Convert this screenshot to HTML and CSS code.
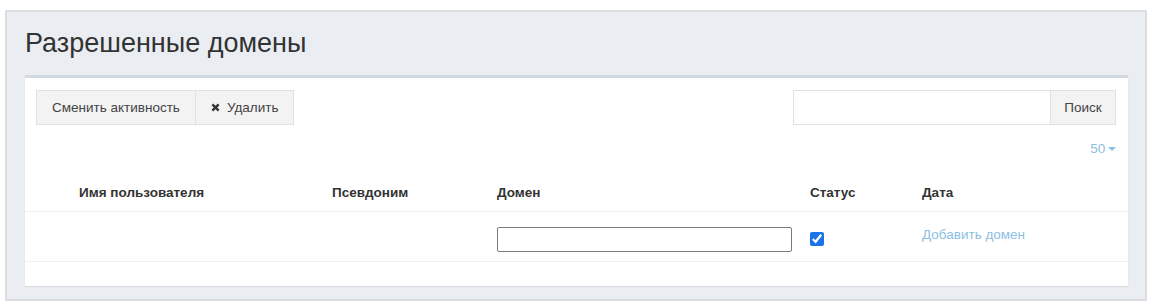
FILE: index.html
```html
<!DOCTYPE html>
<html lang="ru">
<head>
    <meta charset="UTF-8">
    <meta name="viewport" content="width=device-width, initial-scale=1.0">
    <title>Разрешенные домены</title>
    <link rel="stylesheet" href="styles.css">
</head>
<body>
    <div class="panel">
        <h1 class="titulo">Разрешенные домены</h1>

        <div class="box">
            <div class="box-tools">
                <div class="btn-group">
                    <button class="btn">Сменить активность</button>
                    <button class="btn">
                        <svg class="icon-x" width="9" height="9" viewBox="0 0 10 10">
                            <path d="M1.5 1.5 L8.5 8.5 M8.5 1.5 L1.5 8.5" stroke="#333" stroke-width="2.6" stroke-linecap="butt"/>
                        </svg>
                        Удалить
                    </button>
                </div>

                <div class="search-group">
                    <input type="text" class="search-input">
                    <button class="btn btn-search">Поиск</button>
                </div>
            </div>

            <div class="per-page">
                <a href="#" class="per-page-link">50 <span class="caret"></span></a>
            </div>

            <table class="grid">
                <colgroup>
                    <col style="width: 46px">
                    <col style="width: 253px">
                    <col style="width: 165px">
                    <col style="width: 313px">
                    <col style="width: 112px">
                    <col>
                </colgroup>
                <thead>
                    <tr>
                        <th></th>
                        <th>Имя пользователя</th>
                        <th>Псевдоним</th>
                        <th>Домен</th>
                        <th>Статус</th>
                        <th>Дата</th>
                    </tr>
                </thead>
                <tbody>
                    <tr>
                        <td></td>
                        <td></td>
                        <td></td>
                        <td><input type="text" class="domain-input"></td>
                        <td><input type="checkbox" class="status-check" checked></td>
                        <td><a href="#" class="add-link">Добавить домен</a></td>
                    </tr>
                </tbody>
            </table>
        </div>
    </div>
</body>
</html>
```

FILE: styles.css
```css
* {
    margin: 0;
    padding: 0;
    box-sizing: border-box;
    font-family: 'Liberation Sans', Arial, sans-serif;
}

body {
    background-color: #ffffff;
    padding: 10px 5px 0 5px;
}

.panel {
    background-color: #eaedf2;
    border: 2px solid #dcdde0;
    padding: 14px 17px 13px 18px;
}

.titulo {
    font-size: 27px;
    line-height: 34px;
    font-weight: 400;
    color: #333;
    margin-bottom: 15px;
}

.box {
    background: white;
    border-top: 3px solid #d3d9e3;
    box-shadow: 0 1px 1px rgba(0,0,0,0.08);
    padding-bottom: 24px;
}

.box-tools {
    display: flex;
    justify-content: space-between;
    padding: 12px 12px 0 11px;
}

.btn-group {
    display: flex;
}

.btn {
    background-color: #f3f3f3;
    border: 1px solid #e1e1e1;
    color: #444;
    font-size: 13.5px;
    height: 35px;
    padding: 0 15px;
    display: flex;
    align-items: center;
    gap: 7px;
    cursor: pointer;
}

.btn-group .btn + .btn {
    border-left: none;
}

.icon-x {
    display: block;
}

.search-group {
    display: flex;
}

.search-input {
    width: 257px;
    height: 35px;
    border: 1px solid #e1e1e1;
    border-right: none;
    outline: none;
}

.btn-search {
    width: 66px;
    padding: 0;
    justify-content: center;
}

.per-page {
    text-align: right;
    padding-right: 12px;
    margin-top: 13px;
    line-height: 20px;
}

.per-page-link {
    color: #8dc0e3;
    font-size: 13.5px;
    text-decoration: none;
}

.caret {
    display: inline-block;
    width: 0;
    height: 0;
    border-left: 4px solid transparent;
    border-right: 4px solid transparent;
    border-top: 4px solid #8dc0e3;
    vertical-align: 2px;
    margin-left: -1px;
}

.grid {
    width: 100%;
    border-collapse: collapse;
    table-layout: fixed;
    margin-top: 16px;
}

.grid th {
    text-align: left;
    font-size: 13.5px;
    font-weight: 700;
    color: #333;
    line-height: 20px;
    padding: 8px;
    border-bottom: 1px solid #f1f1f1;
}

.grid td {
    vertical-align: top;
    font-size: 13.5px;
    line-height: 20px;
    padding: 13px 8px 0;
    height: 50px;
    border-bottom: 1px solid #f1f1f1;
}

.domain-input {
    display: block;
    width: 295px;
    height: 25px;
    margin-top: 2px;
    border: 1px solid #7a7a7a;
    border-radius: 2px;
    outline: none;
}

.status-check {
    display: block;
    width: 14px;
    height: 14px;
    margin-top: 7px;
    accent-color: #1a73e8;
}

.add-link {
    color: #8dc0e3;
    text-decoration: none;
}
```
